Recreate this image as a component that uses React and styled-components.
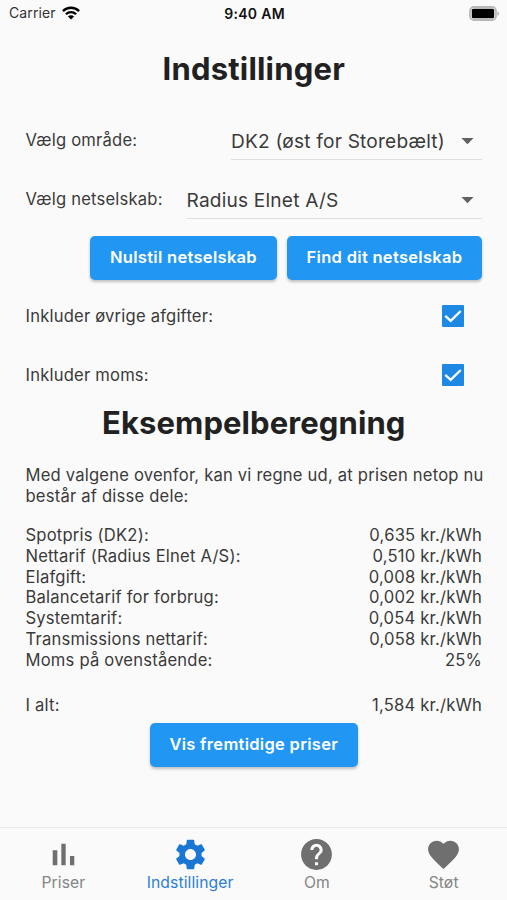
import React from 'react'
import styled, { createGlobalStyle } from 'styled-components'
import { MdArrowDropDown, MdFavorite, MdHelp, MdSettings } from 'react-icons/md'

const prices = [
  { label: 'Spotpris (DK2):', value: '0,635 kr./kWh' },
  { label: 'Nettarif (Radius Elnet A/S):', value: '0,510 kr./kWh' },
  { label: 'Elafgift:', value: '0,008 kr./kWh' },
  { label: 'Balancetarif for forbrug:', value: '0,002 kr./kWh' },
  { label: 'Systemtarif:', value: '0,054 kr./kWh' },
  { label: 'Transmissions nettarif:', value: '0,058 kr./kWh' },
  { label: 'Moms på ovenstående:', value: '25%' },
]

const tabs = [
  { title: 'Priser', icon: <BarsIcon /> },
  { title: 'Indstillinger', icon: <MdSettings />, active: true },
  { title: 'Om', icon: <MdHelp /> },
  { title: 'Støt', icon: <MdFavorite /> },
]

function BarsIcon() {
  return (
    <svg viewBox='0 0 24 24' width='1em' height='1em' fill='currentColor'>
      <path d='M5 9.2h3V19H5zM10.6 5h2.8v14h-2.8zm5.6 8H19v6h-2.8z' />
    </svg>
  )
}

function WifiIcon() {
  return (
    <svg width='18' height='14' viewBox='0 0 18 14' fill='none' stroke='#000' strokeWidth='2.3'>
      <path d='M0.9 5.1a11.5 11.5 0 0 1 16.2 0' />
      <path d='M3.9 8.2a7.2 7.2 0 0 1 10.2 0' />
      <path d='M9 13.6L5.9 10.5a4.4 4.4 0 0 1 6.2 0z' fill='#000' stroke='none' />
    </svg>
  )
}

function BatteryIcon() {
  return (
    <svg width='31' height='15' viewBox='0 0 31 15'>
      <rect x='1' y='1' width='26' height='13' rx='4' fill='#fafafa' stroke='#b8b8b8' strokeWidth='1.8' />
      <rect x='2.8' y='2.8' width='22.4' height='9.4' rx='1.5' fill='#000' />
      <path d='M28.4 5.2c2.4.8 2.4 3.8 0 4.6z' fill='#b8b8b8' />
    </svg>
  )
}

function CheckRow({ label }) {
  return (
    <Row>
      <span>{label}</span>
      <Checkbox>
        <svg width='22' height='22' viewBox='0 0 18 18' fill='none' stroke='#fff' strokeWidth='1.9'>
          <path d='M2.7 8.9L7.1 13L15.3 4.9' />
        </svg>
      </Checkbox>
    </Row>
  )
}

function App() {
  return (
    <Screen>
      <GlobalStyle />
      <StatusBar>
        <Carrier>
          Carrier
          <WifiIcon />
        </Carrier>
        <Clock>9:40 AM</Clock>
        <Battery>
          <BatteryIcon />
        </Battery>
      </StatusBar>
      <Content>
        <Title>Indstillinger</Title>
        <Row>
          <span>Vælg område:</span>
          <Select $width={251}>
            <SelectText>DK2 (øst for Storebælt)</SelectText>
            <MdArrowDropDown />
          </Select>
        </Row>
        <Row>
          <span>Vælg netselskab:</span>
          <Select $width={295.5}>
            <SelectText>Radius Elnet A/S</SelectText>
            <MdArrowDropDown />
          </Select>
        </Row>
        <Buttons>
          <Button $width={187}>Nulstil netselskab</Button>
          <Button $width={195}>Find dit netselskab</Button>
        </Buttons>
        <CheckRow label='Inkluder øvrige afgifter:' />
        <CheckRow label='Inkluder moms:' />
        <Heading>Eksempelberegning</Heading>
        <Intro>
          Med valgene ovenfor, kan vi regne ud, at prisen netop nu
          <br />
          består af disse dele:
        </Intro>
        {prices.map((item) => (
          <PriceRow key={item.label}>
            <span>{item.label}</span>
            <span>{item.value}</span>
          </PriceRow>
        ))}
        <TotalRow>
          <span>I alt:</span>
          <span>1,584 kr./kWh</span>
        </TotalRow>
        <Buttons $center>
          <Button $width={208}>Vis fremtidige priser</Button>
        </Buttons>
      </Content>
      <TabBar>
        {tabs.map((tab) => (
          <Tab key={tab.title} $active={tab.active}>
            {tab.icon}
            <TabLabel $active={tab.active}>{tab.title}</TabLabel>
          </Tab>
        ))}
      </TabBar>
    </Screen>
  )
}

export default App

const GlobalStyle = createGlobalStyle`
  * {
    box-sizing: border-box;
  }
  body {
    margin: 0;
    background: #fafafa;
    font-family: Inter, 'Liberation Sans', sans-serif;
  }
`

const Screen = styled.div`
  width: 507px;
  height: 900px;
  display: flex;
  flex-direction: column;
  overflow: hidden;
  background: #fafafa;
  color: #3a3a3a;
  font-size: 16.6px;
  line-height: 20.8px;
  letter-spacing: 0.2px;
`

const StatusBar = styled.header`
  height: 26px;
  padding: 1px 7px 0 9px;
  display: grid;
  grid-template-columns: 1fr auto 1fr;
  align-items: center;
  color: #111;
  font-size: 14px;
  letter-spacing: 0.1px;
`

const Carrier = styled.div`
  display: flex;
  align-items: center;
  gap: 6px;
  color: #333;
`

const Clock = styled.div`
  padding-top: 1px;
  font-weight: 600;
  letter-spacing: 0.3px;
`

const Battery = styled.div`
  display: flex;
  justify-content: flex-end;
`

const Content = styled.main`
  flex: 1;
  padding: 0 25px 0 25.5px;
`

const Title = styled.h1`
  margin: 0;
  height: 85px;
  line-height: 85px;
  text-align: center;
  color: #212121;
  font-size: 31px;
  font-weight: 700;
  letter-spacing: 0.2px;
`

const Heading = styled(Title)`
  height: 38px;
  line-height: 38px;
  letter-spacing: 0.1px;
`

const Row = styled.div`
  height: 58.7px;
  display: flex;
  align-items: center;
  justify-content: space-between;
`

const Select = styled.div`
  width: ${({ $width }) => $width}px;
  height: 40px;
  padding-top: 1px;
  display: flex;
  align-items: center;
  justify-content: space-between;
  border-bottom: 1px solid #dedede;
  font-size: 19.1px;

  svg {
    font-size: 29px;
    color: #616161;
  }
`

const SelectText = styled.span`
  padding-top: 3px;
`

const Buttons = styled.div`
  height: 58.7px;
  display: flex;
  align-items: center;
  justify-content: ${({ $center }) => ($center ? 'center' : 'flex-end')};
  gap: 10px;
`

const Button = styled.button`
  width: ${({ $width }) => $width}px;
  height: 44px;
  padding: 0 0 1px;
  border: none;
  border-radius: 5px;
  background: #2196f3;
  box-shadow: 0 2px 3px rgba(0, 0, 0, 0.24);
  color: #fff;
  font-family: inherit;
  font-size: 16.5px;
  font-weight: 600;
  letter-spacing: 0.3px;
  white-space: nowrap;
`

const Checkbox = styled.div`
  width: 22px;
  height: 22px;
  margin-right: 18px;
  border-radius: 1px;
  background: #1e88e5;

  svg {
    display: block;
  }
`

const Intro = styled.p`
  margin: 23px 0 18px;
  white-space: nowrap;
`

const PriceRow = styled.div`
  display: flex;
  justify-content: space-between;
`

const TotalRow = styled(PriceRow)`
  margin-top: 24px;
`

const TabBar = styled.nav`
  height: 73px;
  display: grid;
  grid-template-columns: repeat(4, 1fr);
  border-top: 1px solid #ebebeb;
`

const Tab = styled.div`
  padding-top: 8px;
  display: flex;
  flex-direction: column;
  align-items: center;
  color: ${({ $active }) => ($active ? '#1976d2' : '#6f6f6f')};

  svg {
    flex: none;
    font-size: 37px;
  }
`

const TabLabel = styled.span`
  color: ${({ $active }) => ($active ? '#2b7fd5' : '#858585')};
  font-size: 15.7px;
  line-height: 19px;
  letter-spacing: 0.1px;
`
